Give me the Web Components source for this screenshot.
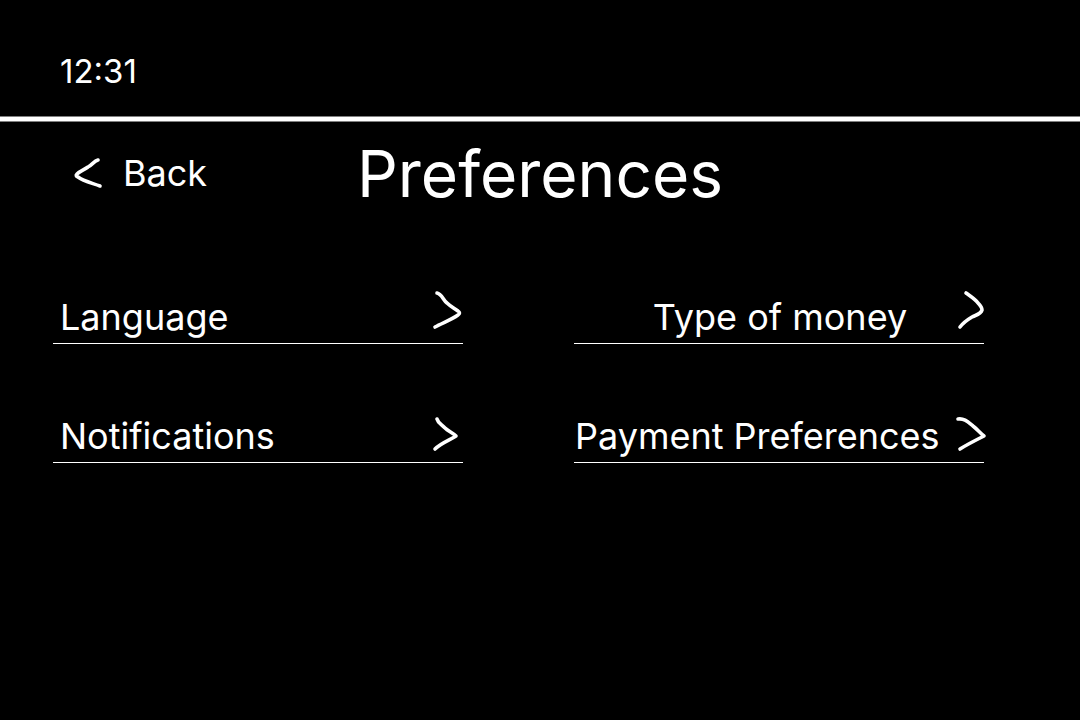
<!DOCTYPE html>
<html lang="en">
<head>
<meta charset="utf-8">
<meta name="viewport" content="width=device-width, initial-scale=1">
<title>Preferences</title>
<style>
  html { background: #000; }
  body { margin: 0; color: #fff; font-family: Inter, "Liberation Sans", sans-serif; }
</style>
</head>
<body>
<preferences-screen></preferences-screen>

<template id="status-bar">
  <style>
    :host { display: block; }
    time { display: block; padding: 51px 60px 25px; font-size: 33px; line-height: 40px; }
    .rule { height: 4px; background: #fff; border: solid #808080; border-width: 1px 0; }
  </style>
  <time><slot></slot></time>
  <div class="rule"></div>
</template>

<template id="stroke-arrow">
  <style>
    :host { display: block; flex: none; }
    svg { display: block; overflow: visible; }
  </style>
  <svg width="32" aria-hidden="true"><path fill="none" stroke="currentColor" stroke-width="3.6" stroke-linecap="round" stroke-linejoin="round"/></svg>
</template>

<template id="page-heading">
  <style>
    :host { display: grid; grid-template-columns: 1fr auto 1fr; align-items: start; padding: 14px 72px 0; }
    button {
      justify-self: start; display: flex; gap: 19px; margin: 0; padding: 15px 0 0; border: 0;
      background: none; color: inherit; font: inherit; font-size: 36px; line-height: 44px; cursor: pointer;
    }
    h1 { margin: 0; font-size: 64px; line-height: 76px; font-weight: 400; }
  </style>
  <button type="button"><stroke-arrow shape="back"></stroke-arrow><span>Back</span></button>
  <h1><slot></slot></h1>
</template>

<template id="preference-link">
  <style>
    :host { display: block; }
    a {
      display: flex; align-items: flex-end; padding-bottom: 4px; border-bottom: 1px solid #fff;
      color: inherit; text-decoration: none; font-size: 36px; line-height: 44px; white-space: nowrap;
    }
    span { flex: 1; padding-left: 7px; }
    :host([align="wide"]) span { padding-left: 1px; }
    :host([align="center"]) span { padding-left: 34px; text-align: center; }
  </style>
  <a><span><slot></slot></span><stroke-arrow></stroke-arrow></a>
</template>

<template id="preferences-screen">
  <style>
    :host { display: block; min-height: 100vh; }
    nav { display: grid; grid-template-columns: 1fr 1fr; gap: 62px 111px; padding: 75px 96px 75px 53px; }
  </style>
  <status-bar>12:31</status-bar>
  <main>
    <page-heading>Preferences</page-heading>
    <nav aria-label="Preferences">
      <preference-link shape="language" href="#language">Language</preference-link>
      <preference-link shape="money" href="#money" align="center">Type of money</preference-link>
      <preference-link shape="notifications" href="#notifications">Notifications</preference-link>
      <preference-link shape="payment" href="#payment" align="wide">Payment Preferences</preference-link>
    </nav>
  </main>
</template>

<script>
  class TemplateElement extends HTMLElement {
    constructor() {
      super();
      this.attachShadow({ mode: "open" })
        .append(document.getElementById(this.localName).content.cloneNode(true));
    }
  }

  const ARROWS = {
    back: [44, "M26 9C22 10 20 14 16 16C12 19 8 20 5 23Q3 25 6 26C11 30 20 32 28 35"],
    language: [52, "M6 6C11 7 12 13 16 16C19 19 23 21 27 24Q30 26 27 28C20 33 11 36 4 40"],
    money: [52, "M14 6C18 9 23 12 26 16C28 18 30 21 30 23C29 27 24 28 20 30C15 33 11 36 8 40"],
    notifications: [52, "M6 13C7 17 10 18 14 22C17 25 22 27 25 30C19 34 10 37 4 43"],
    payment: [52, "M6 13C12 12 16 16 21 20C25 23 28 27 32 30C24 34 16 38 8 43"]
  };

  class StrokeArrow extends TemplateElement {
    static observedAttributes = ["shape"];
    attributeChangedCallback(name, previous, shape) {
      const [height, outline] = ARROWS[shape];
      this.shadowRoot.querySelector("svg").setAttribute("height", height);
      this.shadowRoot.querySelector("path").setAttribute("d", outline);
    }
  }

  class PreferenceLink extends TemplateElement {
    connectedCallback() {
      this.shadowRoot.querySelector("a").href = this.getAttribute("href");
      this.shadowRoot.querySelector("stroke-arrow").setAttribute("shape", this.getAttribute("shape"));
    }
  }

  customElements.define("stroke-arrow", StrokeArrow);
  customElements.define("status-bar", class extends TemplateElement {});
  customElements.define("page-heading", class extends TemplateElement {});
  customElements.define("preference-link", PreferenceLink);
  customElements.define("preferences-screen", class extends TemplateElement {});
</script>
</body>
</html>
